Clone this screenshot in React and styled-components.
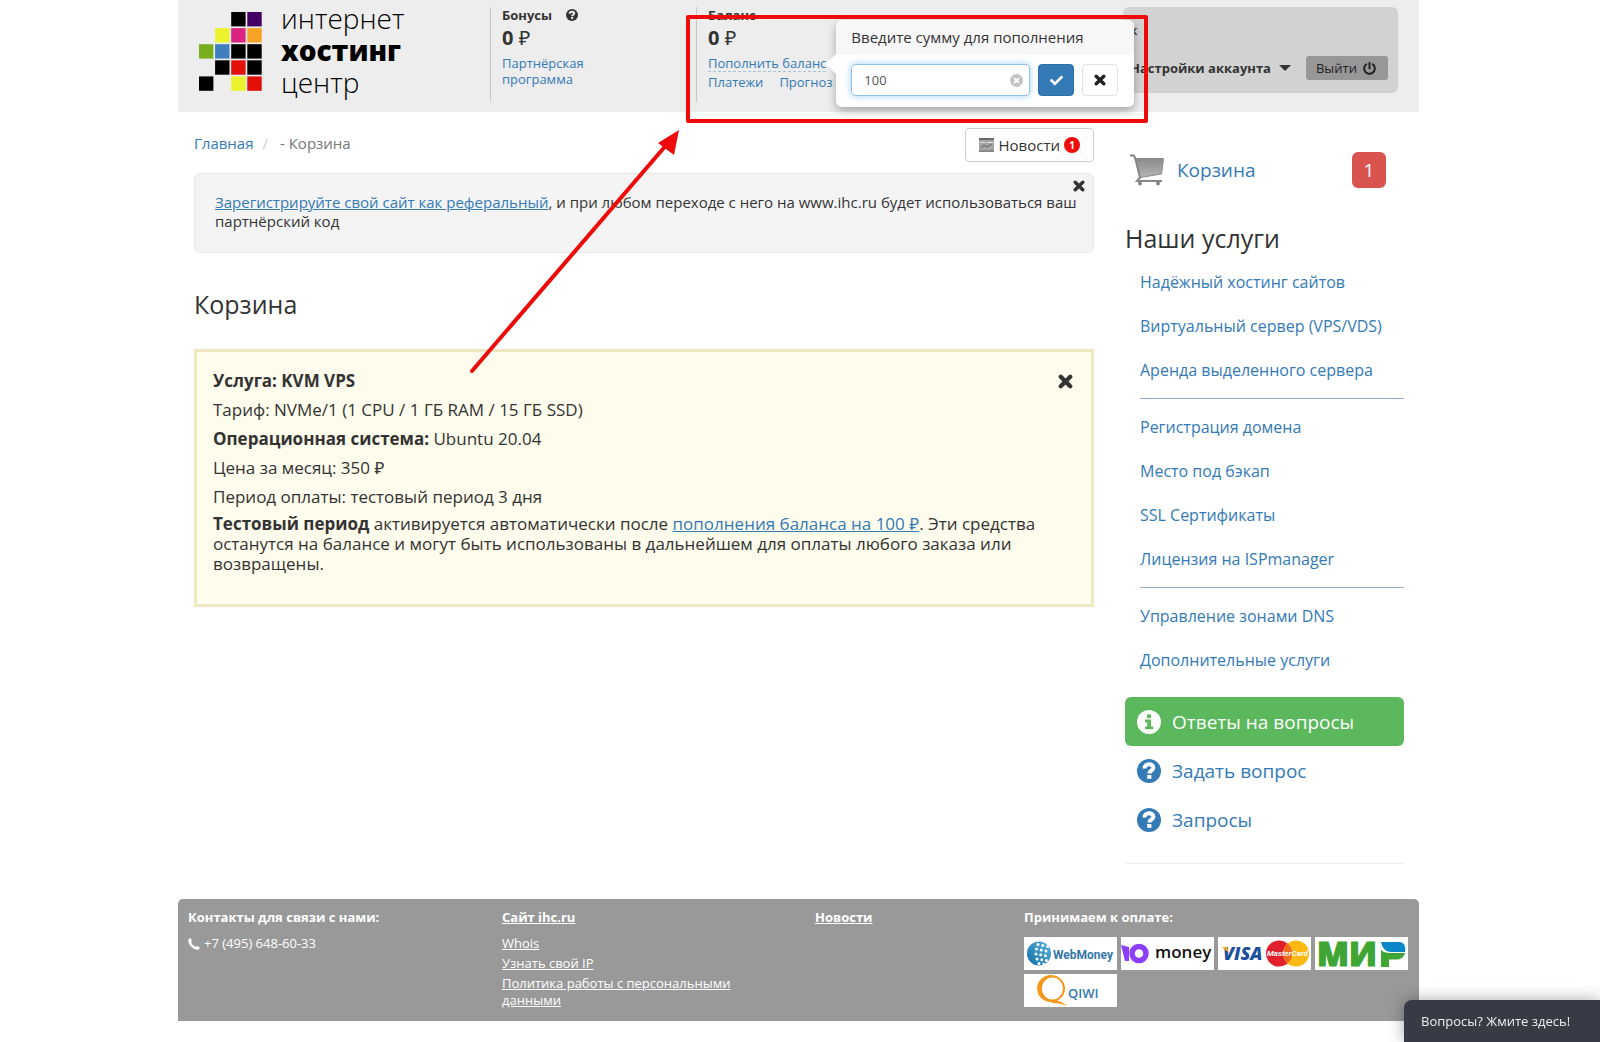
import React, { useState } from 'react';
import styled, { createGlobalStyle, css } from 'styled-components';
import { FaCheck, FaPowerOff } from 'react-icons/fa';

const GlobalStyle = createGlobalStyle`
    * {
        box-sizing: border-box;
    }
    body {
        margin: 0;
        padding-right: 3px;
        background: #fff;
        color: #333;
        font-family: 'Open Sans', 'Noto Sans', sans-serif;
        font-size: 16px;
        overflow-x: hidden;
    }
    a {
        color: #337ab7;
        text-decoration: none;
    }
    button,
    input {
        font-family: inherit;
        color: inherit;
    }
    svg {
        display: block;
        flex: none;
    }
`;

/* ---------- icons ---------- */

const CrossIcon = ({ size = 14 }) => (
    <svg width={size} height={size} viewBox="0 0 14 14" aria-hidden="true">
        <path d="M2.6 2.6 11.4 11.4M11.4 2.6 2.6 11.4" stroke="currentColor" strokeWidth="4" strokeLinecap="round" />
    </svg>
);

const QuestionIcon = ({ size = 24, hole = '#fff' }) => (
    <svg width={size} height={size} viewBox="0 0 24 24" fill="none" aria-hidden="true">
        <circle cx="12" cy="12" r="12" fill="currentColor" />
        <path d="M7.4 9.6c0-5.8 9-5.4 9-.9 0 3-4 2.6-4 5.8" stroke={hole} strokeWidth="4" />
        <rect x="10.2" y="16" width="4.2" height="3.8" fill={hole} />
    </svg>
);

const InfoIcon = () => (
    <svg width="24" height="24" viewBox="0 0 24 24" aria-hidden="true">
        <circle cx="12" cy="12" r="12" fill="#fff" />
        <path d="M10 4.5h4v3.4h-4zM8 9.6h6v6.8h2.2v2.8H8v-2.8h2.2v-4H8z" fill="#5cb85c" />
    </svg>
);

const ClearIcon = () => (
    <svg width="13" height="13" viewBox="0 0 14 14" aria-hidden="true">
        <circle cx="7" cy="7" r="7" fill="#c4c4c4" />
        <path d="M4.4 4.4l5.2 5.2M9.6 4.4 4.4 9.6" stroke="#fff" strokeWidth="1.8" />
    </svg>
);

const PhoneIcon = () => (
    <svg width="12" height="12" viewBox="0 0 12 12" aria-hidden="true">
        <path
            d="M.6 1.2C1.4.2 2.4 0 2.8.5l1.1 2.2c.2.5-.9 1.1-.8 1.6.4 1.7 2.6 4 4.4 4.5.6.1 1-.9 1.5-.8l2.4 1.2c.7.5.2 1.6-.7 2.3C6.3 13-1.2 6.3.6 1.2z"
            fill="#fff"
        />
    </svg>
);

const NewspaperIcon = () => (
    <svg width="15" height="14" viewBox="0 0 15 14" aria-hidden="true">
        <rect width="15" height="14" fill="#a6a6a6" />
        <rect width="15" height="2" fill="#6a6a6a" />
        <path d="M1 4.5h5M8 4.5h6" stroke="#e0e0e0" />
        <path d="M2 10l3-3 3 2 5-3M0 13h15" stroke="#808080" strokeWidth="1.5" fill="none" />
    </svg>
);

const CartIcon = () => (
    <svg width="34" height="32" viewBox="0 0 34 32" fill="none" aria-hidden="true">
        <defs>
            <linearGradient id="cartFill" x1="0" y1="0" x2="0" y2="1">
                <stop offset="0" stopColor="#8a8a8a" />
                <stop offset="1" stopColor="#b5b5b5" />
            </linearGradient>
        </defs>
        <path d="M5 4.5h28.5l-2 15.500-21.500 3.500z" fill="url(#cartFill)" stroke="#8a8a8a" />
        <path d="M0 1.5h4l1.5 3.5 4.500 18.500-3 3.500h25" stroke="#868686" strokeWidth="2" />
        <circle cx="10" cy="29.5" r="2" fill="#868686" />
        <circle cx="28" cy="29.5" r="2" fill="#868686" />
    </svg>
);

const logoCells = [
    [2, 0, '#000'],
    [3, 0, '#430064'],
    [1, 1, '#ecf22c'],
    [2, 1, '#dc2381'],
    [3, 1, '#f7a325'],
    [0, 2, '#78ae1c'],
    [1, 2, '#3e7fbd'],
    [2, 2, '#000'],
    [3, 2, '#000'],
    [1, 3, '#000'],
    [2, 3, '#e21006'],
    [3, 3, '#000'],
    [0, 4, '#000'],
    [2, 4, '#ecf22c'],
    [3, 4, '#e21006'],
];

const LogoMark = () => (
    <svg width="63" height="79" viewBox="0 0 63 79" aria-hidden="true">
        {logoCells.map(([x, y, fill]) => (
            <rect key={`${x}-${y}`} x={x * 16.1} y={y * 16.1} width="14.4" height="14.4" fill={fill} />
        ))}
    </svg>
);

/* ---------- header ---------- */

const Container = styled.div`
    position: relative;
    max-width: 1241px;
    margin: 0 auto;
`;

const Header = styled.header`
    display: flex;
    align-items: flex-start;
    padding: 7px 21px 10px;
    background: #ededed;
`;

const Logo = styled.a`
    display: flex;
    gap: 19px;
    width: 291px;
    padding-top: 5px;
    color: #000;
`;

const LogoText = styled.span`
    display: flex;
    flex-direction: column;
    margin-top: -10px;
    font-size: 28px;
    font-weight: 300;
    line-height: 32px;

    strong {
        font-weight: 800;
    }
`;

const Account = styled.section`
    width: 206px;
    min-height: 95px;
    padding-left: 11px;
    border-left: 1px solid #c8c8c8;
    font-size: 13px;
    line-height: 16px;
`;

const AccountTitle = styled.h2`
    display: flex;
    align-items: center;
    gap: 14px;
    margin: 0;
    font-size: 13px;
    line-height: 16px;
`;

const Amount = styled.p`
    margin: 0 0 2px;
    font-size: 20px;
    line-height: 30px;
`;

const NarrowLink = styled.a`
    display: block;
    max-width: 100px;
`;

const TopUp = styled.div`
    position: relative;
    width: fit-content;
    margin-bottom: 2px;
    border-bottom: 1px dashed #a9c3da;
`;

const AccountLinks = styled.nav`
    display: flex;
    gap: 16px;
`;

const Popover = styled.form`
    position: absolute;
    z-index: 2;
    top: -35px;
    left: calc(100% + 10px);
    width: 298px;
    border-radius: 6px;
    background: #fff;
    box-shadow: 0 4px 10px rgba(0, 0, 0, 0.3);

    &:before {
        content: '';
        position: absolute;
        top: 34px;
        left: -10px;
        border: 10px solid transparent;
        border-left: 0;
        border-right-color: #fff;
    }
`;

const PopoverTitle = styled.label`
    display: block;
    padding: 6px 15px 7px;
    border-radius: 6px 6px 0 0;
    background: #f7f7f7;
    font-size: 15px;
    line-height: 22px;
`;

const PopoverBody = styled.div`
    display: flex;
    gap: 8px;
    padding: 9px 16px 11px 15px;
`;

const Field = styled.div`
    display: flex;
    align-items: center;
    flex: 1;
    min-width: 0;
    height: 32px;
    padding: 0 6px 0 12px;
    border: 1px solid #8fc3ee;
    border-radius: 4px;
    box-shadow: 0 0 7px rgba(102, 175, 233, 0.6);
`;

const AmountInput = styled.input`
    flex: 1;
    min-width: 0;
    padding: 0;
    border: 0;
    outline: 0;
    background: none;
    color: #555;
    font-size: 13px;
`;

const IconButton = styled.button`
    display: flex;
    padding: 0;
    border: 0;
    background: none;
    cursor: pointer;
`;

const SquareButton = styled(IconButton)`
    align-items: center;
    justify-content: center;
    width: 36px;
    height: 32px;
    border: 1px solid ${(props) => (props.$primary ? '#2e6da4' : '#e2e2e2')};
    border-radius: 4px;
    background: ${(props) => (props.$primary ? '#337ab7' : '#fff')};
    color: ${(props) => (props.$primary ? '#fff' : '#222')};
`;

const UserBox = styled.section`
    width: 275px;
    min-height: 86px;
    margin-left: auto;
    padding: 12px 10px 12px 7px;
    border-radius: 6px;
    background: #d2d2d2;
`;

const UserName = styled.p`
    margin: 0 0 15px;
    font-size: 13px;
    font-weight: 600;
    line-height: 22px;
`;

const UserActions = styled.div`
    display: flex;
    align-items: center;
    justify-content: space-between;
`;

const SettingsButton = styled(IconButton)`
    align-items: center;
    gap: 8px;
    font-size: 13px;
    font-weight: 700;

    &:after {
        content: '';
        border: 6px solid transparent;
        border-top-color: #333;
        border-bottom: 0;
    }
`;

const LogoutButton = styled(IconButton)`
    align-items: center;
    gap: 6px;
    height: 24px;
    padding: 0 12px 0 10px;
    border-radius: 3px;
    background: #979797;
    color: #222;
    font-size: 13px;
`;

/* ---------- main column ---------- */

const Columns = styled.div`
    display: grid;
    grid-template-columns: minmax(0, 1fr) 279px;
    gap: 31px;
    padding: 16px 15px 0 16px;
`;

const TopLine = styled.div`
    display: flex;
    justify-content: space-between;
    align-items: flex-start;
    margin-bottom: 11px;
`;

const Breadcrumbs = styled.nav`
    display: flex;
    padding-top: 4px;
    color: #777;
    font-size: 15px;
    line-height: 22px;
`;

const Slash = styled.span`
    padding: 0 12px 0 9px;
    color: #ccc;
`;

const NewsButton = styled(IconButton)`
    align-items: center;
    gap: 4px;
    height: 34px;
    padding: 0 13px;
    border: 1px solid #ccc;
    border-radius: 4px;
    font-size: 15px;
    line-height: 20px;
`;

const Dot = styled.span`
    width: 16px;
    height: 16px;
    border-radius: 50%;
    background: #f00a0a;
    color: #fff;
    font-size: 10px;
    font-weight: 700;
    line-height: 16px;
    text-align: center;
`;

const Notice = styled.aside`
    position: relative;
    min-height: 80px;
    padding: 19px 12px 20px 20px;
    border: 1px solid #e8e8e8;
    border-radius: 5px;
    background: #f4f4f4;

    p {
        margin: 0;
        font-size: 15px;
        line-height: 19px;
    }
    a {
        text-decoration: underline;
    }
`;

const NoticeClose = styled(IconButton)`
    position: absolute;
    top: 6px;
    right: 8px;
`;

const Heading = styled.h1`
    margin: 0;
    font-size: 25px;
    font-weight: 400;
    line-height: 32px;
`;

const CartHeading = styled(Heading)`
    margin: 35px 0 29px;
`;

const OrderCard = styled.article`
    display: flex;
    align-items: flex-start;
    justify-content: space-between;
    padding: 14px 18px 30px 16px;
    border: 3px solid #efe7c2;
    background: #fefcec;

    p {
        margin: 0;
        font-size: 17px;
        line-height: 29px;
    }
    a {
        text-decoration: underline;
    }
`;

const OrderText = styled.div`
    max-width: 830px;

    p:last-child {
        padding-top: 3px;
        line-height: 20px;
    }
`;

const OrderRemove = styled(IconButton)`
    margin-top: 8px;
`;

/* ---------- sidebar ---------- */

const Sidebar = styled.aside`
    padding: 24px 0 19px;
    border-bottom: 1px solid #eee;
`;

const CartLink = styled.a`
    display: flex;
    align-items: center;
    gap: 13px;
    margin-bottom: 34px;
    padding: 0 18px 0 5px;
    font-size: 19px;
    line-height: 36px;
`;

const CartCount = styled.span`
    width: 34px;
    margin-left: auto;
    border-radius: 6px;
    background: #d9534f;
    color: #fff;
    text-align: center;
`;

const ServiceGroup = styled.ul`
    margin: 0 0 0 15px;
    padding: 6px 0;
    list-style: none;
    font-size: 16px;
    line-height: 44px;

    & + & {
        border-top: 1px solid #8fb0cf;
    }
`;

const HelpLinks = styled.nav`
    padding-top: 9px;
`;

const HelpLink = styled.a`
    display: flex;
    align-items: center;
    gap: 11px;
    height: 49px;
    padding-left: 12px;
    border-radius: 6px;
    font-size: 19px;

    ${(props) =>
        props.$filled &&
        css`
            background: #5cb85c;
            color: #fff;
        `}
`;

/* ---------- footer ---------- */

const Footer = styled.footer`
    display: grid;
    grid-template-columns: 314fr 313fr 209fr 385fr;
    min-height: 122px;
    margin-top: 35px;
    padding: 10px 10px 8px;
    border-radius: 5px 5px 0 0;
    background: #999;
    color: #fff;
    font-size: 13px;
    line-height: 17px;

    h3 {
        margin: 0 0 9px;
        font-size: 13px;
        line-height: 17px;
    }
    a {
        color: #fff;
        text-decoration: underline;
    }
`;

const Phone = styled.p`
    display: flex;
    align-items: center;
    gap: 4px;
    margin: 0;
`;

const FooterLinks = styled.ul`
    max-width: 240px;
    margin: 0;
    padding: 0;
    list-style: none;

    li + li {
        margin-top: 3px;
    }
`;

const Payments = styled.div`
    display: flex;
    flex-wrap: wrap;
    gap: 4px;
    padding-top: 2px;

    svg {
        background: #fff;
    }
`;

const ChatTab = styled.button`
    position: fixed;
    right: 0;
    bottom: 0;
    z-index: 3;
    width: 196px;
    height: 42px;
    padding: 0 0 0 17px;
    border: 0;
    border-radius: 8px 0 0 0;
    background: #383b45;
    box-shadow: 0 0 16px rgba(0, 0, 0, 0.35);
    color: #eee;
    font-size: 13px;
    text-align: left;
`;

/* red frame around the popover and the arrow that leads to it */
const Highlight = styled.svg`
    position: absolute;
    z-index: 4;
    top: 0;
    left: 284px;
    pointer-events: none;
`;

const services = [
    ['Надёжный хостинг сайтов', 'Виртуальный сервер (VPS/VDS)', 'Аренда выделенного сервера'],
    ['Регистрация домена', 'Место под бэкап', 'SSL Сертификаты', 'Лицензия на ISPmanager'],
    ['Управление зонами DNS', 'Дополнительные услуги'],
];

const WebMoney = () => (
    <svg width="93" height="33" viewBox="0 0 93 33" role="img" aria-label="WebMoney">
        <defs>
            <linearGradient id="globe" x1="0" y1="1" x2="1" y2="0">
                <stop offset="0" stopColor="#0f6ea8" />
                <stop offset="1" stopColor="#5cb4dc" />
            </linearGradient>
        </defs>
        <circle cx="15" cy="16.5" r="12" fill="url(#globe)" />
        <g stroke="#fff" strokeWidth="3" strokeLinecap="round" strokeDasharray="0 4.8" fill="none">
            <path d="M14 7.5l14 3M12.5 12l14 3M12 17l14 2.5M13 22l13 2M15 26.5l9 1" />
        </g>
        <text x="29" y="22" fontFamily="Roboto" fontWeight="700" fontSize="12" fill="#3577a9">
            WebMoney
        </text>
    </svg>
);

const YooMoney = () => (
    <svg width="93" height="33" viewBox="0 0 93 33" role="img" aria-label="ЮMoney">
        <path d="M0 8l8 2v14H4z" fill="#8b3ffd" />
        <circle cx="18" cy="16.5" r="7" fill="none" stroke="#8b3ffd" strokeWidth="5.5" />
        <text x="34" y="21" fontFamily="Open Sans" fontWeight="600" fontSize="17" fill="#111">
            money
        </text>
    </svg>
);

const VisaMastercard = () => (
    <svg width="93" height="33" viewBox="0 0 93 33" role="img" aria-label="Visa, MasterCard">
        <text x="5" y="23" fontFamily="Open Sans" fontWeight="800" fontStyle="italic" fontSize="18" fill="#1c4f9c">
            VISA
        </text>
        <path d="M4 10h5l2 6z" fill="#f5a623" />
        <circle cx="61" cy="16.5" r="13" fill="#e2202c" />
        <circle cx="78" cy="16.5" r="13" fill="#fcb813" />
        <path d="M69.5 6.5a13 13 0 0 1 0 20a13 13 0 0 1 0-20z" fill="#ee6a1f" />
        <text x="49" y="19" fontFamily="Roboto" fontWeight="700" fontStyle="italic" fontSize="8" fill="#fff">
            MasterCard
        </text>
    </svg>
);

const Mir = () => (
    <svg width="93" height="33" viewBox="0 0 93 33" role="img" aria-label="МИР">
        <text
            x="2"
            y="29"
            fontFamily="Open Sans"
            fontWeight="800"
            fontSize="33"
            fill="#3fa535"
            stroke="#3fa535"
            strokeWidth="1.2"
        >
            МИ
        </text>
        <path d="M66 13c2 2 5 3 9 3h15c-1 4-4 6.5-8 6.5h-8V30h-8z" fill="#3fa535" />
        <path d="M66 5h18c5 0 7 4 6 10H76c-5 0-9-4-10-10z" fill="#0b87c9" />
    </svg>
);

const Qiwi = () => (
    <svg width="93" height="33" viewBox="0 0 93 33" role="img" aria-label="QIWI">
        <path
            d="M27 1a14 13.5 0 1 0 .1 27a14 13.5 0 0 0-.1-27zM28.5 3.5a10.5 11 0 1 1-.1 22a10.5 11 0 0 1 .1-22z"
            fill="#f39a1c"
            fillRule="evenodd"
        />
        <path d="M27 26c6 0 12 2 16 6-4-2-9-3-15-3z" fill="#f39a1c" />
        <text x="44" y="24" fontFamily="Open Sans" fontWeight="600" fontSize="13" fill="#3577b0">
            QIWI
        </text>
    </svg>
);

function TopUpPopover() {
    const [amount, setAmount] = useState('100');

    return (
        <Popover onSubmit={(e) => e.preventDefault()}>
            <PopoverTitle htmlFor="amount">Введите сумму для пополнения</PopoverTitle>
            <PopoverBody>
                <Field>
                    <AmountInput id="amount" value={amount} onChange={(e) => setAmount(e.target.value)} />
                    <IconButton type="button" aria-label="Очистить" onClick={() => setAmount('')}>
                        <ClearIcon />
                    </IconButton>
                </Field>
                <SquareButton type="submit" $primary aria-label="Пополнить">
                    <FaCheck size={13} />
                </SquareButton>
                <SquareButton type="button" aria-label="Отмена">
                    <CrossIcon size={12} />
                </SquareButton>
            </PopoverBody>
        </Popover>
    );
}

function App() {
    return (
        <>
            <GlobalStyle />
            <Container>
                <Header>
                    <Logo href="#">
                        <LogoMark />
                        <LogoText>
                            <span>интернет</span>
                            <strong>хостинг</strong>
                            <span>центр</span>
                        </LogoText>
                    </Logo>
                    <Account>
                        <AccountTitle>
                            Бонусы <QuestionIcon size={12} hole="#ededed" />
                        </AccountTitle>
                        <Amount>
                            <b>0</b> ₽
                        </Amount>
                        <NarrowLink href="#">Партнёрская программа</NarrowLink>
                    </Account>
                    <Account>
                        <AccountTitle>Баланс</AccountTitle>
                        <Amount>
                            <b>0</b> ₽
                        </Amount>
                        <TopUp>
                            <a href="#">Пополнить баланс</a>
                            <TopUpPopover />
                        </TopUp>
                        <AccountLinks>
                            <a href="#">Платежи</a>
                            <a href="#">Прогноз</a>
                        </AccountLinks>
                    </Account>
                    <UserBox>
                        <UserName>к</UserName>
                        <UserActions>
                            <SettingsButton type="button">Настройки аккаунта</SettingsButton>
                            <LogoutButton type="button">
                                Выйти <FaPowerOff size={13} />
                            </LogoutButton>
                        </UserActions>
                    </UserBox>
                </Header>

                <Columns>
                    <main>
                        <TopLine>
                            <Breadcrumbs>
                                <a href="#">Главная</a>
                                <Slash>/</Slash>
                                <span>- Корзина</span>
                            </Breadcrumbs>
                            <NewsButton type="button">
                                <NewspaperIcon />
                                Новости
                                <Dot>1</Dot>
                            </NewsButton>
                        </TopLine>
                        <Notice>
                            <p>
                                <a href="#">Зарегистрируйте свой сайт как реферальный</a>, и при любом переходе с него на
                                www.ihc.ru будет использоваться ваш партнёрский код
                            </p>
                            <NoticeClose type="button" aria-label="Закрыть">
                                <CrossIcon size={12} />
                            </NoticeClose>
                        </Notice>
                        <CartHeading>Корзина</CartHeading>
                        <OrderCard>
                            <OrderText>
                                <p>
                                    <b>Услуга: KVM VPS</b>
                                </p>
                                <p>Тариф: NVMe/1 (1 CPU / 1 ГБ RAM / 15 ГБ SSD)</p>
                                <p>
                                    <b>Операционная система:</b> Ubuntu 20.04
                                </p>
                                <p>Цена за месяц: 350 ₽</p>
                                <p>Период оплаты: тестовый период 3 дня</p>
                                <p>
                                    <b>Тестовый период</b> активируется автоматически после{' '}
                                    <a href="#">пополнения баланса на 100 ₽</a>. Эти средства останутся на балансе и
                                    могут быть использованы в дальнейшем для оплаты любого заказа или возвращены.
                                </p>
                            </OrderText>
                            <OrderRemove type="button" aria-label="Удалить">
                                <CrossIcon size={15} />
                            </OrderRemove>
                        </OrderCard>
                    </main>

                    <Sidebar>
                        <CartLink href="#">
                            <CartIcon />
                            Корзина
                            <CartCount>1</CartCount>
                        </CartLink>
                        <Heading as="h2">Наши услуги</Heading>
                        {services.map((group) => (
                            <ServiceGroup key={group[0]}>
                                {group.map((item) => (
                                    <li key={item}>
                                        <a href="#">{item}</a>
                                    </li>
                                ))}
                            </ServiceGroup>
                        ))}
                        <HelpLinks>
                            <HelpLink href="#" $filled>
                                <InfoIcon />
                                Ответы на вопросы
                            </HelpLink>
                            <HelpLink href="#">
                                <QuestionIcon />
                                Задать вопрос
                            </HelpLink>
                            <HelpLink href="#">
                                <QuestionIcon />
                                Запросы
                            </HelpLink>
                        </HelpLinks>
                    </Sidebar>
                </Columns>

                <Footer>
                    <section>
                        <h3>Контакты для связи с нами:</h3>
                        <Phone>
                            <PhoneIcon />
                            +7 (495) 648-60-33
                        </Phone>
                    </section>
                    <section>
                        <h3>
                            <a href="#">Сайт ihc.ru</a>
                        </h3>
                        <FooterLinks>
                            <li>
                                <a href="#">Whois</a>
                            </li>
                            <li>
                                <a href="#">Узнать свой IP</a>
                            </li>
                            <li>
                                <a href="#">Политика работы с персональными данными</a>
                            </li>
                        </FooterLinks>
                    </section>
                    <section>
                        <h3>
                            <a href="#">Новости</a>
                        </h3>
                    </section>
                    <section>
                        <h3>Принимаем к оплате:</h3>
                        <Payments>
                            <WebMoney />
                            <YooMoney />
                            <VisaMastercard />
                            <Mir />
                            <Qiwi />
                        </Payments>
                    </section>
                </Footer>

                <Highlight width="700" height="380" viewBox="0 0 700 380" aria-hidden="true">
                    <rect
                        x="226"
                        y="17"
                        width="458"
                        height="104"
                        fill="none"
                        stroke="#ef0a0a"
                        strokeWidth="4"
                        strokeLinejoin="round"
                    />
                    <path d="M10 371 206 143" stroke="#ef0a0a" strokeWidth="4" strokeLinecap="round" />
                    <path d="M217 130l-5 25-16-12z" fill="#ef0a0a" />
                </Highlight>
            </Container>
            <ChatTab type="button">Вопросы? Жмите здесь!</ChatTab>
        </>
    );
}

export default App;
